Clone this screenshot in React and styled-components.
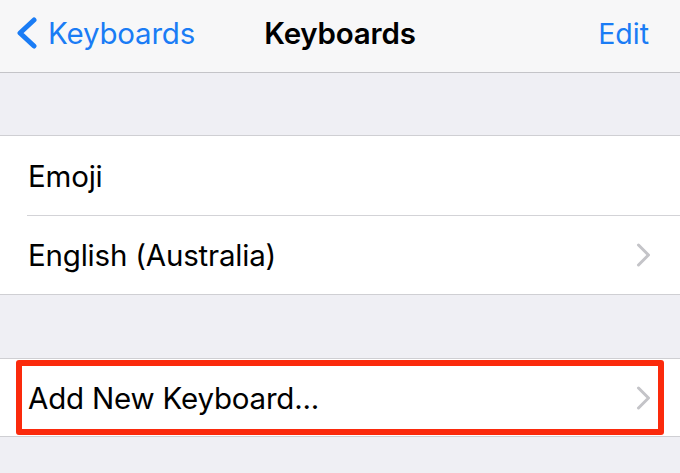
import React from "react";
import styled, { createGlobalStyle } from "styled-components";

const Global = createGlobalStyle`
  html, body {
    margin: 0;
    padding: 0;
    background: #efeff4;
  }
  body {
    font-family: Inter, "Liberation Sans", sans-serif;
    -webkit-font-smoothing: antialiased;
  }
`;

const Screen = styled.div`
  width: 680px;
  height: 473px;
  overflow: hidden;
  background: #efeff4;
  display: flex;
  flex-direction: column;
`;

const NavBar = styled.div`
  height: 73px;
  flex-shrink: 0;
  box-sizing: border-box;
  background: #f7f7f8;
  border-bottom: 1px solid #c4c4c8;
  display: grid;
  grid-template-columns: 1fr auto 1fr;
  align-items: center;
  padding: 0 15px 6px 15px;
`;

const BackButton = styled.div`
  display: flex;
  align-items: center;
  gap: 9px;
  color: #1a7cf5;
  font-size: 29.5px;
  letter-spacing: -0.2px;
`;

const Title = styled.div`
  font-size: 29.5px;
  font-weight: 600;
  color: #000;
  letter-spacing: -0.2px;
`;

const EditButton = styled.div`
  justify-self: end;
  padding-right: 16px;
  color: #1a7cf5;
  font-size: 28.5px;
`;

const Gap = styled.div`
  height: ${p => p.h}px;
  flex-shrink: 0;
`;

const Group = styled.div`
  background: #fff;
  border-top: 1px solid #cfcfd3;
  border-bottom: 1px solid #cfcfd3;
  flex-shrink: 0;
`;

const Row = styled.div`
  position: relative;
  height: ${p => p.h || 79}px;
  display: flex;
  align-items: center;
  justify-content: space-between;
  padding: 0 28px;
  margin-left: ${p => (p.divider ? 27 : 0)}px;
  padding-left: ${p => (p.divider ? 1 : 28)}px;
  border-bottom: ${p => (p.divider ? "1px solid #d3d3d7" : "none")};
`;

const Label = styled.span`
  font-size: 29.5px;
  color: #000;
  letter-spacing: -0.2px;
`;

const Highlight = styled.div`
  position: absolute;
  top: 1px;
  bottom: 1px;
  left: 16px;
  right: 16px;
  border: 6px solid #fb2a0c;
  border-radius: 3px;
  pointer-events: none;
`;

const BackChevron = () => (
  <svg width="24" height="32" viewBox="0 0 24 32">
    <path d="M19 3 L5 16 L19 29" fill="none" stroke="#1a7cf5" strokeWidth="5" strokeLinecap="round" strokeLinejoin="round" />
  </svg>
);

const Disclosure = () => (
  <svg width="16" height="24" viewBox="0 0 16 24">
    <path d="M2.5 2 L12.5 12 L2.5 22" fill="none" stroke="#c4c4c8" strokeWidth="3" strokeLinecap="round" strokeLinejoin="round" />
  </svg>
);

export default function App() {
  return (
    <Screen>
      <Global />
      <NavBar>
        <BackButton>
          <BackChevron />
          Keyboards
        </BackButton>
        <Title>Keyboards</Title>
        <EditButton>Edit</EditButton>
      </NavBar>
      <Gap h={62} />
      <Group>
        <Row divider>
          <Label>Emoji</Label>
        </Row>
        <Row h={78}>
          <Label>English (Australia)</Label>
          <Disclosure />
        </Row>
      </Group>
      <Gap h={63} />
      <Group>
        <Row h={77}>
          <Label>Add New Keyboard...</Label>
          <Disclosure />
          <Highlight />
        </Row>
      </Group>
    </Screen>
  );
}
